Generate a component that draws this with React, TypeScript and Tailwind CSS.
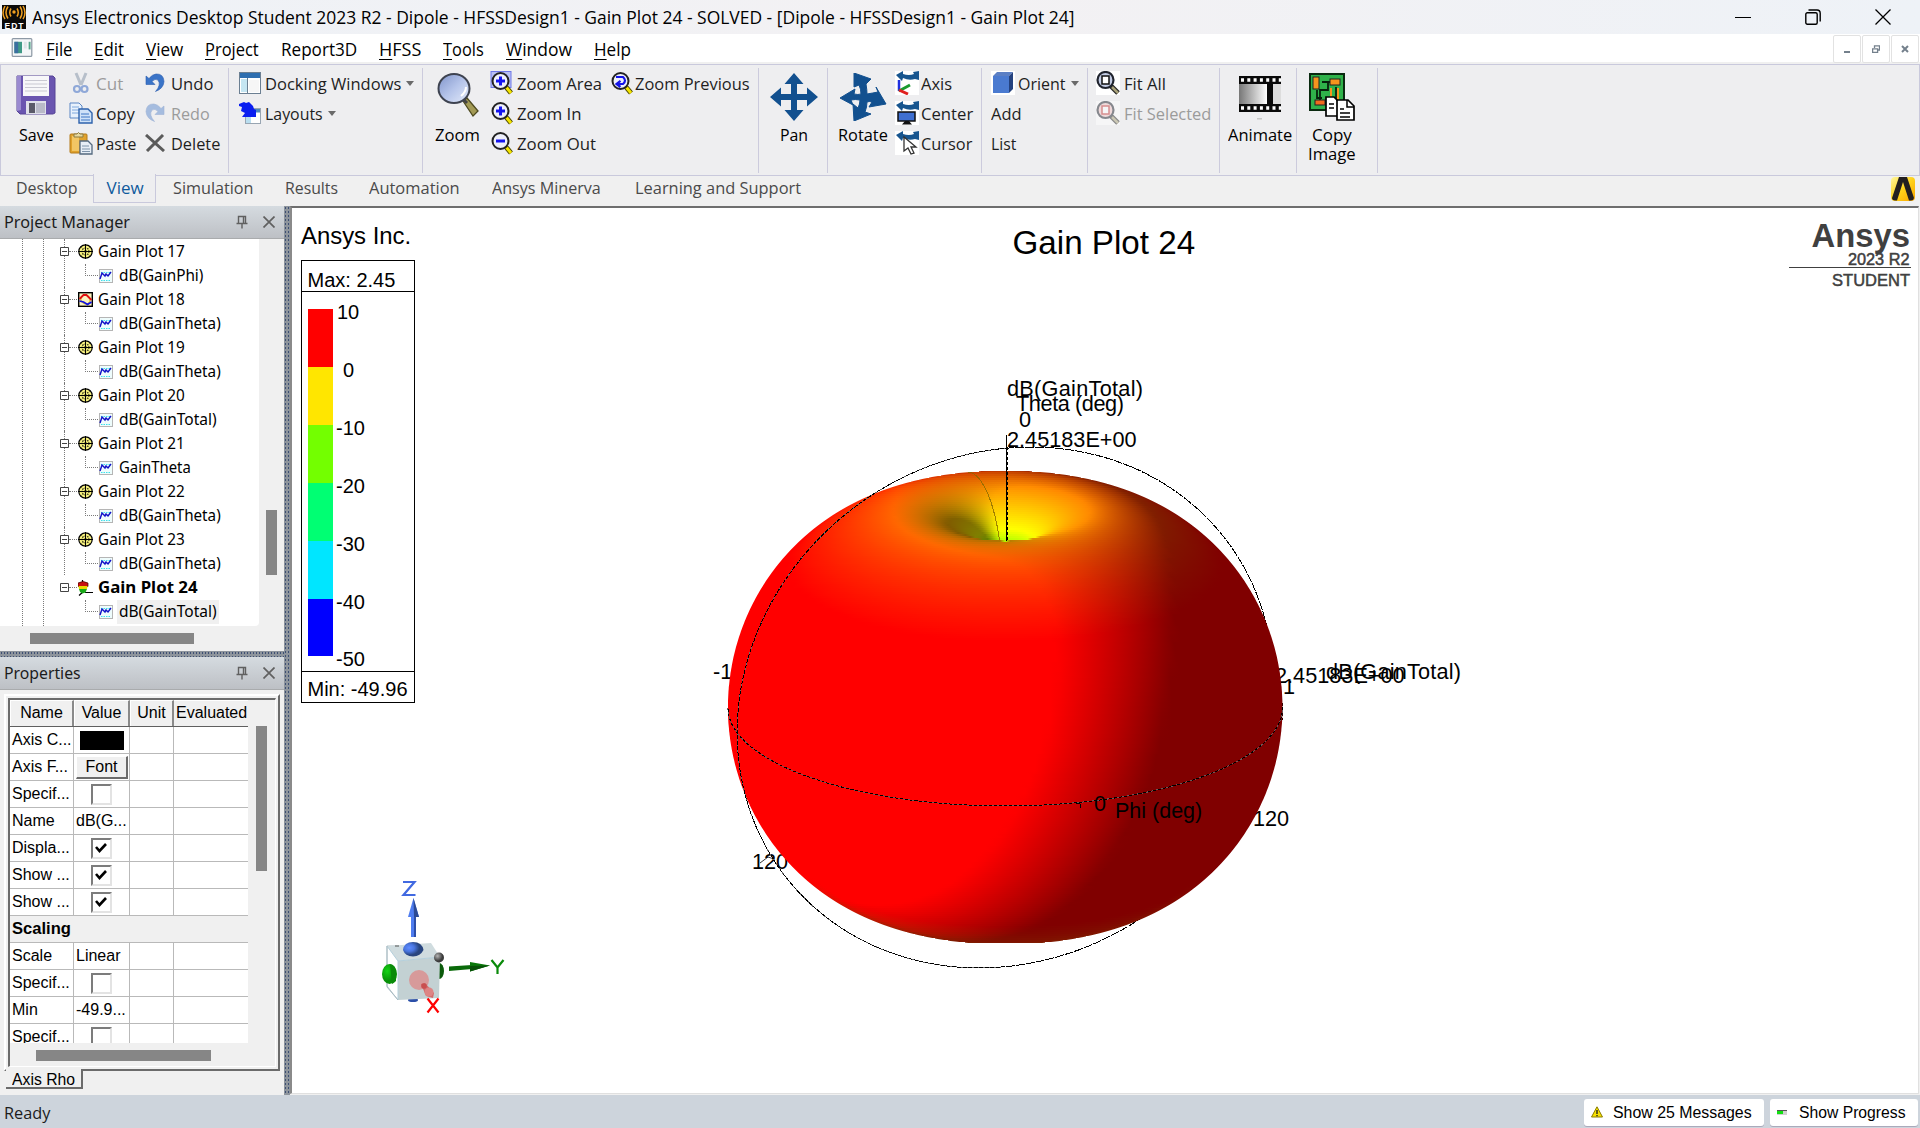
import React, { useLayoutEffect, useRef, useState } from "react";

/* ---------- text fitted to a given width ---------- */
function Fit({ w, className = "", children }: { w: number; className?: string; children: React.ReactNode }) {
  const ref = useRef<HTMLSpanElement>(null);
  const [k, setK] = useState(1);
  useLayoutEffect(() => {
    if (ref.current) setK(w / ref.current.offsetWidth);
  }, [w]);
  return (
    <span className={"inline-block shrink-0 whitespace-nowrap " + className} style={{ width: w }}>
      <span ref={ref} className="inline-block origin-left whitespace-nowrap" style={{ transform: `scaleX(${k})` }}>
        {children}
      </span>
    </span>
  );
}

/* ---------- radiation surface ---------- */
const CX = 1005.2;
const CY = 707.5;
const R = 277.3;
const EL = (20.8 * Math.PI) / 180;
const AZ = (14.8 * Math.PI) / 180;
const SE = Math.sin(EL);
const CE = Math.cos(EL);

function gain(c: number, s: number) {
  if (s < 0.006) return -49.96;
  return Math.max(-49.96, 2.45 + 20 * Math.log10(Math.max(1e-6, Math.abs(Math.cos((Math.PI / 2) * c) / s))));
}
// p: x right, f toward the viewer (horizontal), z up; unit sphere
function field(x: number, f: number, z: number) {
  const d = Math.sqrt(x * x + f * f + z * z) || 1e-9;
  const g = gain(z / d, Math.sqrt(x * x + f * f) / d);
  return d - (g + 49.96) / 52.41;
}
function toWorld(u: number, v: number, t: number): [number, number, number] {
  return [u, t * CE - v * SE, v * CE + t * SE];
}
function cast(u: number, v: number): [number, number, number] | null {
  const q = 1 - u * u - v * v;
  if (q <= 0) return null;
  const top = Math.sqrt(q);
  let prev = top;
  for (let t = top; t > -top; t -= 0.02) {
    const p = toWorld(u, v, t);
    if (field(p[0], p[1], p[2]) < 0) {
      let a = prev;
      let b = t;
      for (let i = 0; i < 12; i++) {
        const m = (a + b) / 2;
        const w = toWorld(u, v, m);
        if (field(w[0], w[1], w[2]) < 0) b = m;
        else a = m;
      }
      return toWorld(u, v, b);
    }
    prev = t;
  }
  return null;
}
const L = [-0.81, 0.47, 0.345];
function shade(p: [number, number, number]) {
  const [x, f, z] = p;
  const e = 0.002;
  let nx = field(x + e, f, z) - field(x - e, f, z);
  let nf = field(x, f + e, z) - field(x, f - e, z);
  let nz = field(x, f, z + e) - field(x, f, z - e);
  const n = Math.sqrt(nx * nx + nf * nf + nz * nz) || 1;
  nx /= n;
  nf /= n;
  nz /= n;
  const lit = Math.min(1, 0.5 + 1.16 * Math.max(0, nx * L[0] + nf * L[1] + nz * L[2]));
  const d = Math.sqrt(x * x + f * f + z * z) || 1e-9;
  const g = gain(z / d, Math.sqrt(x * x + f * f) / d);
  const raw = Math.max(0, -g) / 15.5;
  const h = Math.min(4, raw < 1 ? Math.pow(raw, 0.9) : 1 + (raw - 1) * 2.2);
  const r = h < 1 ? 1 : h < 2 ? 2 - h : 0;
  const gr = h < 1 ? h : h < 3 ? 1 : 4 - h;
  const b = h < 2 ? 0 : h < 3 ? h - 2 : 1;
  return `rgb(${Math.round(255 * r * lit)},${Math.round(255 * gr * lit)},${Math.round(255 * b * lit)})`;
}

type Row = { y: number; x0: number; x1: number; stops: { o: number; c: string }[] };
function buildRows(): Row[] {
  const rows: Row[] = [];
  for (let y = 470; y < 946; y += 2) {
    const v = (CY - (y + 1)) / R;
    if (!cast(0, v)) continue;
    const edge = (s: number) => {
      let a = 0;
      let b = s;
      for (let i = 0; i < 12; i++) {
        const m = (a + b) / 2;
        if (cast(m, v)) a = m;
        else b = m;
      }
      return a;
    };
    const u0 = edge(-1);
    const u1 = edge(1);
    const n = Math.max(6, Math.round(((u1 - u0) * R) / (y < 546 ? 5 : 10)));
    const stops: { o: number; c: string }[] = [];
    for (let i = 0; i <= n; i++) {
      const u = u0 + ((u1 - u0) * i) / n;
      const p = cast(u, v);
      if (p) stops.push({ o: i / n, c: shade(p) });
    }
    rows.push({ y, x0: CX + u0 * R, x1: CX + u1 * R, stops });
  }
  return rows;
}
const ROWS = buildRows();
const OUTLINE =
  "M" +
  ROWS.map((r) => `${r.x0.toFixed(1)} ${r.y + 1}`).join("L") +
  "L" +
  ROWS.slice()
    .reverse()
    .map((r) => `${r.x1.toFixed(1)} ${r.y + 1}`)
    .join("L") +
  "Z";

function curve(fn: (a: number) => [number, number, number], from: number, to: number) {
  const pts: string[] = [];
  for (let i = 0; i <= 90; i++) {
    const a = ((from + ((to - from) * i) / 90) * Math.PI) / 180;
    const [x, f, z] = fn(a);
    pts.push(`${(CX + R * x).toFixed(1)} ${(CY - R * (z * CE - f * SE)).toFixed(1)}`);
  }
  return "M" + pts.join("L");
}
const thetaRing = (a: number): [number, number, number] => [
  Math.sin(a) * Math.cos(AZ),
  -Math.sin(a) * Math.sin(AZ),
  Math.cos(a),
];
const phiRing = (a: number): [number, number, number] => [Math.cos(a), Math.sin(a), 0];
const seam = (a: number): [number, number, number] => {
  const r = (gain(Math.cos(a), Math.sin(a)) + 49.96) / 52.41;
  return [-r * Math.sin(a) * Math.sin(AZ), -r * Math.sin(a) * Math.cos(AZ), r * Math.cos(a)];
};
const RING_BACK = curve(thetaRing, 0, 180);
const RING_FRONT = curve(thetaRing, 180, 360);
const EQUATOR = curve(phiRing, 0, 180);
const SEAM = curve(seam, 7.5, 36);

const BANDS = ["#ff0000", "#ffe600", "#73ff00", "#00ff73", "#00e6ff", "#0000ff"];
const TICKS: [string, number, number][] = [
  ["10", 337, 319],
  ["0", 343, 376.5],
  ["-10", 336, 434.5],
  ["-20", 336, 492.5],
  ["-30", 336, 550.5],
  ["-40", 336, 608.5],
  ["-50", 336, 665.5],
];

function Triad() {
  return (
    <g>
      <path d="M387 946l10-0M387 946v40l11 14" stroke="#b9c6cb" fill="none" />
      <ellipse cx="413" cy="1000" rx="5" ry="2" fill="#2b4fa8" />
      <ellipse cx="439" cy="971" rx="5" ry="8" fill="#0b5a0b" />
      <path d="M387 946L431 943L440 957L398 961Z" fill="#d0dcdf" />
      <path d="M398 961L440 957L439 998L398 1000Z" fill="#c3d1d3" />
      <path d="M387 946L398 961V1000M398 961L440 957" stroke="#b5d0dc" fill="none" />
      <path d="M387 946v41l11 13" stroke="#a9bcc4" fill="none" />
      <path d="M395 946h4" stroke="#555" />
      <ellipse cx="389.5" cy="974" rx="7.5" ry="10" fill="url(#gGreen)" />
      <path d="M390 964q6 1 6 9v8q-2 2-4 3z" fill="#0a8a0a" />
      <path d="M403 950q1-8 10-8t10.500 8q-3 6-10.500 6.500q-8-.5-10-6.500z" fill="url(#gBlue)" />
      <circle cx="439" cy="957.500" r="5" fill="url(#gGray)" />
      <rect x="411" y="914" width="5" height="23" fill="#4f7df0" />
      <rect x="414" y="914" width="2" height="23" fill="#2c4ea8" />
      <path d="M413.500 898L408 917h11z" fill="#4f7df0" />
      <path d="M413.500 898L414 917h5z" fill="#2c4a94" />
      <path d="M449 966.500l23-1.500v4l-23 2z" fill="#0a6a0a" />
      <path d="M470 962l20 3.500-20 6z" fill="#0a780a" />
      <path d="M470 966l20-.5-20 6z" fill="#065006" />
      <circle cx="419" cy="980" r="10" fill="#d79a9a" />
      <path d="M421 984l4-1 9 10-1 5-7-2z" fill="#d46a6a" />
      <circle cx="429" cy="992" r="4.500" fill="#dd8585" />
      <circle cx="424" cy="986" r="2.800" fill="#c94f4f" />
      <path d="M403 882h11.500L403.500 895H415.500" fill="none" stroke="#4169e1" strokeWidth="2.200" />
      <path d="M491.500 960l6 7.500 6-7.500M497.500 967v7" fill="none" stroke="#0a8a0a" strokeWidth="2.200" />
      <path d="M427.500 998.500l11 14M438.500 998.500l-11 14" fill="none" stroke="#f00" strokeWidth="2.200" />
    </g>
  );
}

function Plot() {
  return (
    <svg
      className="block h-[885px] w-[1626px]"
      viewBox="292 208 1626 885"
      fontFamily="'Liberation Sans', Arial, sans-serif"
      fill="#000"
    >
      <defs>
        <clipPath id="outline">
          <path d={OUTLINE} />
        </clipPath>
        <radialGradient id="gGreen" cx=".35" cy=".35">
          <stop offset="0" stopColor="#14d414" />
          <stop offset="1" stopColor="#089008" />
        </radialGradient>
        <radialGradient id="gBlue" cx=".3" cy=".4">
          <stop offset="0" stopColor="#5f8cff" />
          <stop offset=".5" stopColor="#4a76e0" />
          <stop offset="1" stopColor="#28457f" />
        </radialGradient>
        <radialGradient id="gGray" cx=".35" cy=".35">
          <stop offset="0" stopColor="#b5b5b5" />
          <stop offset="1" stopColor="#3c3c3c" />
        </radialGradient>
        {ROWS.map((r, i) => (
          <linearGradient key={i} id={"r" + i} gradientUnits="userSpaceOnUse" x1={r.x0} x2={r.x1} y1="0" y2="0">
            {r.stops.map((s, j) => (
              <stop key={j} offset={s.o} stopColor={s.c} />
            ))}
          </linearGradient>
        ))}
      </defs>

      <text x="301" y="244" fontSize="23.900">Ansys Inc.</text>
      <text x="1012.500" y="253.500" fontSize="33.200">Gain Plot 24</text>

      <g fill="#404040">
        <text x="1811.500" y="246.500" fontSize="32.800" fontWeight="bold">Ansys</text>
        <text x="1909.500" y="265" fontSize="16.300" textAnchor="end" stroke="#404040" strokeWidth=".5">2023 R2</text>
        <rect x="1789" y="267" width="122" height="1" />
        <text x="1910" y="286" fontSize="16.500" textAnchor="end" stroke="#404040" strokeWidth=".5">STUDENT</text>
      </g>

      <g shapeRendering="crispEdges">
        <rect x="301.500" y="260.500" width="113" height="442" fill="#fff" stroke="#000" />
        <path d="M301 291.500H415M301 671.500H415" stroke="#000" />
        {BANDS.map((c, i) => (
          <rect key={c} x="308" y={309 + i * 58} width="25" height={i === 5 ? 57 : 58} fill={c} />
        ))}
      </g>
      <g fontSize="20">
        <text x="307.500" y="287">Max: 2.45</text>
        <text x="307.500" y="696">Min: -49.96</text>
        {TICKS.map(([t, x, y]) => (
          <text key={t} x={x} y={y}>{t}</text>
        ))}
      </g>

      <g fontSize="21.700">
        <text x="1007" y="396" textLength="136">dB(GainTotal)</text>
        <text x="1016" y="411" textLength="108">Theta (deg)</text>
        <text x="1019" y="427">0</text>
        <text x="1007" y="447">2.45183E+00</text>
        <text x="1275" y="683">2.45183E+00</text>
        <text x="1326" y="679" textLength="135">dB(GainTotal)</text>
        <text x="1283" y="694">1</text>
        <text x="713" y="679">-1</text>
        <text x="1253" y="826">120</text>
        <text x="752" y="869">120</text>
      </g>
      <g fill="none" stroke="#000" strokeWidth="1">
        <path d={RING_BACK} shapeRendering="crispEdges" strokeDasharray="9 1" />
        <path d="M760 863l8-6 6 2" strokeWidth=".8" />
        <path d="M1282.500 703V720" strokeDasharray="3 2" shapeRendering="crispEdges" />
      </g>
      <g clipPath="url(#outline)" shapeRendering="crispEdges">
        {ROWS.map((r, i) => (
          <rect key={i} x={r.x0 - 3} y={r.y} width={r.x1 - r.x0 + 6} height="2" fill={`url(#r${i})`} />
        ))}
      </g>
      <g fill="none" strokeWidth="1" shapeRendering="crispEdges">
        <path d={SEAM} stroke="#8a6a00" strokeOpacity=".8" />
        <path d={RING_FRONT} stroke="#6a6a6a" />
        <path d={RING_FRONT} stroke="#000" strokeDasharray="4 1.500" />
        <path d={EQUATOR} stroke="#6a5a5a" />
        <path d={EQUATOR} stroke="#000" strokeDasharray="3 2" />
        <path d="M1006.500 435V541" stroke="#000" />
        <path d="M1007.500 447V541" stroke="#000" strokeDasharray="3 2" />
        <path d="M1076 803l4 1 1 4" stroke="#000" />
      </g>
      <g fontSize="21.500">
        <text x="1094" y="811">0</text>
        <text x="1115" y="818">Phi (deg)</text>
      </g>
      <Triad />
    </svg>
  );
}

/* ---------- ribbon icons ---------- */
type IP = { className?: string };
const S = ({ vb, className, children }: { vb: string; className: string; children: React.ReactNode }) => (
  <svg viewBox={vb} className={"block shrink-0 " + className}>{children}</svg>
);

const SaveIcon = () => (
  <S vb="0 0 40 40" className="h-10 w-10">
    <path d="M1 1h36l2 2v35l-2 1H4l-3-3z" fill="#6a55b0" stroke="#564596" />
    <path d="M1 1h4v34l-4 1z" fill="#9a8ad0" />
    <rect x="7" y="1" width="26" height="20" fill="#f7f7f9" />
    <path d="M9 5.500h22M9 9h22M9 12.500h22M9 16h22" stroke="#c9c9d2" />
    <rect x="10" y="26" width="20" height="13" fill="#dfe0ea" />
    <rect x="13" y="28" width="6" height="10" fill="#5a5a68" />
    <rect x="20" y="28" width="9" height="10" fill="#b9bac8" />
  </S>
);
const CutIcon = () => (
  <S vb="0 0 24 24" className="h-6 w-6">
    <path d="M7 2l5 12M17 2l-5 12" stroke="#b7bfca" strokeWidth="3" />
    <circle cx="8" cy="18" r="3" fill="none" stroke="#8fa8d8" strokeWidth="2.200" />
    <circle cx="15.500" cy="18" r="3" fill="none" stroke="#8fa8d8" strokeWidth="2.200" />
  </S>
);
const CopyIcon = () => (
  <S vb="0 0 24 24" className="h-6 w-6">
    <path d="M1 2h9l3 3v12H1z" fill="#e8f1fc" stroke="#5a86c4" />
    <path d="M3 6h7M3 9h7M3 12h7" stroke="#7fa8dd" />
    <path d="M10 8h9l4 4v10H10z" fill="#cfe2f8" stroke="#2e62ac" strokeWidth="1.400" />
    <path d="M12 13h8M12 16h9M12 19h9" stroke="#3f77c4" />
  </S>
);
const PasteIcon = () => (
  <S vb="0 0 24 24" className="h-6 w-6">
    <rect x="1" y="3" width="17" height="19" rx="1" fill="#e0a22c" stroke="#b47a1a" />
    <rect x="3" y="5" width="7" height="15" fill="#f2c664" />
    <path d="M5 6V3h3q1.500-3 3 0h3v3z" fill="#e7d9a0" stroke="#8a7a40" />
    <path d="M11 10h8l4 4v9H11z" fill="#e7eef6" stroke="#54697f" strokeWidth="1.300" />
    <path d="M13 15h7M13 18h8M13 20.500h8" stroke="#7f94aa" />
  </S>
);
const UndoIcon = ({ className = "" }: IP) => (
  <S vb="0 0 20 22" className={"h-[22px] w-5 " + className}>
    <path d="M1 4v8.500h9l-3-3q3-3.500 6-1.500q3.500 5-2.500 11.500q8-3 8.500-10q-.5-8-8-7.500q-4 .5-7 4.500z" fill="#3a74c8" stroke="#2a5cae" strokeWidth=".6" />
  </S>
);
const DeleteIcon = () => (
  <S vb="0 0 20 18" className="h-[18px] w-5">
    <path d="M1 1l18 16M18 1L2 17" stroke="#5b5b5b" strokeWidth="3" fill="none" />
  </S>
);
const DockIcon = () => (
  <S vb="0 0 22 22" className="h-[22px] w-[22px]">
    <rect x=".5" y=".5" width="21" height="21" fill="#fff" stroke="#6b7f92" />
    <rect x="1" y="1" width="20" height="5" fill="#2f6fb0" />
    <rect x="2" y="7" width="6" height="13" fill="#c5e6f2" />
    <path d="M8.500 6v15" stroke="#6b7f92" />
    <rect x="10" y="8" width="10" height="12" fill="#f6f6f6" />
  </S>
);
const LayoutIcon = () => (
  <S vb="0 0 22 24" className="h-6 w-[22px]">
    <rect x="6.500" y="7.500" width="15" height="15" fill="#fff" stroke="#98a5b2" />
    <rect x="7" y="8" width="14" height="3.500" fill="#4d87bd" />
    <rect x="7" y="12" width="5" height="10" fill="#b9def0" />
    <path d="M0 3l5-2 2 1 3-1 4 4 1 3 2 1v7H3l3-4-4-2 1-4-3-1z" fill="#0a1ef0" />
  </S>
);
const BigZoom = () => (
  <S vb="0 0 42 44" className="h-11 w-[42px]">
    <defs>
      <linearGradient id="lens" x1="0" y1="0" x2="1" y2="1">
        <stop offset="0" stopColor="#7f93c9" />
        <stop offset=".5" stopColor="#b5c4ea" />
        <stop offset="1" stopColor="#e4ebfa" />
      </linearGradient>
    </defs>
    <path d="M26 28l4-3 11 13-5 5z" fill="#a39a55" stroke="#4e4a20" strokeWidth="1.300" />
    <path d="M25 25l5 5" stroke="#444" strokeWidth="3" />
    <ellipse cx="17" cy="15.500" rx="15.500" ry="14.500" fill="url(#lens)" stroke="#3e4350" strokeWidth="2" />
    <path d="M24 23q5-4 5-9" stroke="#fff" strokeWidth="2" fill="none" />
  </S>
);
const ZoomGlyph = ({ kind }: { kind: string }) => (
  <S vb="0 0 24 24" className="h-6 w-6">
    {kind === "area" && <rect x="1" y=".5" width="20" height="16" fill="#b9c0f4" stroke="#6f78e8" />}
    <path d="M16 16l5 6" stroke="#4a4600" strokeWidth="5" />
    <path d="M16.500 16.500l4.500 5.500" stroke="#f4e400" strokeWidth="3" />
    <circle cx="10.500" cy="10" r="8" fill="#eef0fb" stroke="#222" strokeWidth="2" />
    {kind === "prev" ? (
      <path d="M6 6h7q4 3.500 0 7H8m2.500-3.200L6.500 13l4 3" fill="none" stroke="#1414e8" strokeWidth="2.200" />
    ) : (
      <path d={kind === "out" ? "M6 10h9" : "M6 10h9M10.500 5.500v9"} stroke="#1414f0" strokeWidth="3" />
    )}
  </S>
);
const PanIcon = () => (
  <S vb="0 0 48 48" className="h-12 w-12">
    <path
      d="M24 0l9.500 11H27v10h10v-6.500L48 24l-11 9.500V27H27v10h6.500L24 48l-9.500-11H21V27H11v6.500L0 24l11-9.500V21h10V11h-6.500z"
      fill="#12508f"
    />
  </S>
);
const RotateIcon = () => (
  <S vb="0 0 48 48" className="h-12 w-12">
    <path
      d="M15 0l17 6-5 5q1 6 1 10q6-1 11-2l-2-5 10 17-17 3 3-5q-3-1-5 0q0 5-2 10l6 2-17 7-1-17 5 4q2-4 2-8q-5-1-9 0l2 5L1 25l15-9-1 5q4 1 7 0q0-5-2-9l-5 2z"
      fill="#12508f"
      stroke="#12508f"
    />
  </S>
);
const MiniRotate = () => (
  <path d="M1 4l7-4v3q6 2 11 0l-1-2 6-1v9l-4-1q-6 2-12-1l-1 3z" fill="#17558f" />
);
const AxisIcon = () => (
  <S vb="0 0 24 24" className="h-6 w-6">
    <rect width="24" height="24" fill="#fff" />
    <MiniRotate />
    <path d="M4 9v11" stroke="#2030e0" strokeWidth="2.500" />
    <path d="M4 20l11-6" stroke="#1a9a30" strokeWidth="3" />
    <path d="M4 19l9 4" stroke="#e02020" strokeWidth="3" />
  </S>
);
const CenterIcon = () => (
  <S vb="0 0 24 24" className="h-6 w-6">
    <rect width="24" height="24" fill="#fff" />
    <MiniRotate />
    <rect x="3" y="11" width="17" height="9" fill="#3f6fd0" stroke="#111" strokeWidth="1.500" />
    <path d="M10 20h4l3 3.500H7z" fill="#111" />
  </S>
);
const CursorIcon = () => (
  <S vb="0 0 24 24" className="h-6 w-6">
    <rect width="24" height="24" fill="#fff" />
    <MiniRotate />
    <path d="M9 6v14l4-3 3 6 3-1-3-6h5z" fill="#fff" stroke="#333" strokeWidth="1.300" />
  </S>
);
const CubeIcon = () => (
  <S vb="0 0 24 24" className="h-6 w-6">
    <rect width="24" height="24" fill="#fff" />
    <path d="M2 5l4-4h16l-4 4z" fill="#5b7fc4" />
    <path d="M18 5l4-4v17l-4 4z" fill="#24427f" />
    <rect x="2" y="5" width="16" height="17" fill="#4a7ad0" />
  </S>
);
const FitIcon = ({ red = false }: { red?: boolean }) => (
  <S vb="0 0 24 24" className={red ? "h-6 w-6 opacity-50" : "h-6 w-6"}>
    <rect width="24" height="24" fill="#fff" />
    <path d="M14 14l8 8" stroke="#222" strokeWidth="5" />
    <path d="M16 16l6 6" stroke="#a9a27a" strokeWidth="2.500" />
    <circle cx="9.500" cy="9" r="8" fill={red ? "#f0c6c6" : "#c3cce4"} stroke="#20242e" strokeWidth="2.200" />
    <rect x="6" y="5" width="7" height="8" fill="#fff" stroke={red ? "#c03030" : "#111"} strokeWidth="1.500" />
  </S>
);
const AnimateIcon = () => (
  <S vb="0 0 42 44" className="h-11 w-[42px]">
    <defs>
      <linearGradient id="film">
        <stop offset="0" stopColor="#777" />
        <stop offset="1" stopColor="#fff" />
      </linearGradient>
    </defs>
    <rect width="42" height="36" fill="#0a0a0a" />
    <rect x="0" y="8" width="28" height="20" fill="url(#film)" />
    <rect x="34" y="8" width="8" height="20" fill="#ddd" />
    <path d="M2 4h40M2 32h40" stroke="#fff" strokeWidth="3.500" strokeDasharray="3 3.300" />
    <rect x="18" y="42" width="5" height="1.500" fill="#c8c8c8" />
  </S>
);
const CopyImageIcon = () => (
  <S vb="0 0 46 48" className="h-12 w-[46px]">
    <rect x="1" y="1" width="34" height="36" fill="#2fb24a" stroke="#0a2a10" strokeWidth="2" />
    <path d="M13 9h6v8h-8v12M19 9h5M22 17v14M27 14v12M8 17v8h5" stroke="#06220c" strokeWidth="1.800" fill="none" />
    <rect x="4" y="4" width="6" height="12" fill="#f7941d" stroke="#222" />
    <rect x="21" y="6" width="10" height="6" fill="#f7941d" stroke="#222" />
    <rect x="6" y="27" width="10" height="5" fill="#f26a1d" stroke="#222" />
    <path d="M22 15v12M29 15v12" stroke="#f7941d" strokeWidth="2" />
    <path d="M17 24h8l4 4v15H17z" fill="#fff" stroke="#000" strokeWidth="1.700" />
    <path d="M28 27h11l6 6v14H28z" fill="#fff" stroke="#000" strokeWidth="1.700" />
    <path d="M38 27v7h7M20 31h5M20 35h5M31 36h4M31 40h10M31 44h10" stroke="#000" strokeWidth="1.500" fill="none" />
  </S>
);
const Caret = () => (
  <svg viewBox="0 0 8 5" className="ml-[5px] h-[5px] w-[8px] shrink-0">
    <path d="M0 0h8L4 5z" fill="#6a6a6a" />
  </svg>
);

/* ---------- ribbon ---------- */
function Item({ icon, iw = 28, w, dim, caret, children }: {
  icon?: React.ReactNode; iw?: number; w: number; dim?: boolean; caret?: boolean; children: string;
}) {
  return (
    <div className={"flex h-[30px] items-center " + (dim ? "text-[#9b9b9b]" : "text-[#1e1e1e]")}>
      {icon && <span className="flex shrink-0" style={{ width: iw }}>{icon}</span>}
      <Fit w={w}>{children}</Fit>
      {caret && <Caret />}
    </div>
  );
}
function Big({ icon, lines, pad }: { icon: React.ReactNode; lines: [string, number][]; pad: string }) {
  return (
    <div className="flex flex-col items-center">
      <div className={"flex h-[52px] items-start " + pad}>{icon}</div>
      {lines.map(([t, w]) => (
        <div key={t} className="flex h-[19px] items-center">
          <Fit w={w}>{t}</Fit>
        </div>
      ))}
    </div>
  );
}
const Group = ({ className, children }: { className: string; children: React.ReactNode }) => (
  <div className={"flex h-[105px] shrink-0 border-r border-[#cccbdd] " + className}>{children}</div>
);

function Ribbon() {
  return (
    <div className="mt-[2px] flex h-[112px] border border-[#c9c9dc] bg-[#eeeef0] pt-[3px] text-[17px]">
      <Group className="w-[228px]">
        <div className="w-[68px] pt-[5px] pl-[2px]">
          <Big icon={<SaveIcon />} pad="pt-[2px]" lines={[["Save", 35]]} />
        </div>
        <div className="w-[75px]">
          <Item icon={<CutIcon />} iw={27} w={27} dim>Cut</Item>
          <Item icon={<CopyIcon />} iw={27} w={39}>Copy</Item>
          <Item icon={<PasteIcon />} iw={27} w={40}>Paste</Item>
        </div>
        <div className="pl-px">
          <Item icon={<UndoIcon />} iw={26} w={42}>Undo</Item>
          <Item icon={<UndoIcon className="-scale-x-100 opacity-40" />} iw={26} w={39} dim>Redo</Item>
          <Item icon={<DeleteIcon />} iw={26} w={49}>Delete</Item>
        </div>
      </Group>
      <Group className="w-[194px] pl-[10px]">
        <div>
          <Item icon={<DockIcon />} iw={26} w={136} caret>Docking Windows</Item>
          <Item icon={<LayoutIcon />} iw={26} w={58} caret>Layouts</Item>
        </div>
      </Group>
      <Group className="w-[336px] pl-[12px]">
        <div className="w-[54px] pt-[5px]">
          <div className="w-[45px]">
            <Big icon={<BigZoom />} pad="" lines={[["Zoom", 45]]} />
          </div>
        </div>
        <div className="w-[121px] pl-px">
          <Item icon={<ZoomGlyph kind="area" />} iw={26.500} w={85}>Zoom Area</Item>
          <Item icon={<ZoomGlyph kind="in" />} iw={26.500} w={65}>Zoom In</Item>
          <Item icon={<ZoomGlyph kind="out" />} iw={26.500} w={79}>Zoom Out</Item>
        </div>
        <Item icon={<ZoomGlyph kind="prev" />} iw={25} w={115}>Zoom Previous</Item>
      </Group>
      <Group className="w-[69px] justify-center pt-[5px] pl-[2px]">
        <Big icon={<PanIcon />} pad="" lines={[["Pan", 28]]} />
      </Group>
      <Group className="w-[154px] pl-[10px]">
        <div className="w-[57px] pt-[5px]">
          <div className="w-[49px]">
            <Big icon={<RotateIcon />} pad="" lines={[["Rotate", 50]]} />
          </div>
        </div>
        <div>
          <Item icon={<AxisIcon />} iw={26} w={31}>Axis</Item>
          <Item icon={<CenterIcon />} iw={26} w={52}>Center</Item>
          <Item icon={<CursorIcon />} iw={26} w={51}>Cursor</Item>
        </div>
      </Group>
      <Group className="w-[106px] pl-[9px]">
        <div>
          <Item icon={<CubeIcon />} iw={27} w={48} caret>Orient</Item>
          <Item w={31}>Add</Item>
          <Item w={25}>List</Item>
        </div>
      </Group>
      <Group className="w-[132px] pl-[8px]">
        <div>
          <Item icon={<FitIcon />} w={42}>Fit All</Item>
          <Item icon={<FitIcon red />} w={87} dim>Fit Selected</Item>
        </div>
      </Group>
      <Group className="w-[77px] justify-center pt-[5px] pl-[4px]">
        <Big icon={<AnimateIcon />} pad="pt-[3px]" lines={[["Animate", 64]]} />
      </Group>
      <Group className="w-[81px] pt-[5px] pl-[11px]">
        <Big icon={<CopyImageIcon />} pad="" lines={[["Copy", 40], ["Image", 48]]} />
      </Group>
    </div>
  );
}

/* ---------- panels ---------- */
const PanelHeader = ({ title, w }: { title: string; w: number }) => (
  <div className="flex h-[33px] shrink-0 items-center border-b border-[#a9abad] bg-linear-to-b from-[#d5dbe0] to-[#bdc0c5] pr-[9px] pl-[4px] font-['Noto_Sans',sans-serif] text-[17px] text-[#1c1c1c]">
    <Fit w={w} className="-mt-[2px]">{title}</Fit>
    <svg viewBox="0 0 12 14" className="mr-[15px] ml-auto h-[14px] w-[12px]">
      <path d="M2.500 8V1.500h7V8M7.500 1.500V8M.5 8.500h11M6 9v4.500" fill="none" stroke="#606060" strokeWidth="1.400" />
    </svg>
    <svg viewBox="0 0 12 12" className="h-[12px] w-[12px]">
      <path d="M.5.5l11 11M11.500.5l-11 11" stroke="#606060" strokeWidth="1.700" />
    </svg>
  </div>
);

const PLOTS: [string, string, number][] = [
  ["Gain Plot 17", "dB(GainPhi)", 84],
  ["Gain Plot 18", "dB(GainTheta)", 102],
  ["Gain Plot 19", "dB(GainTheta)", 102],
  ["Gain Plot 20", "dB(GainTotal)", 98],
  ["Gain Plot 21", "GainTheta", 72],
  ["Gain Plot 22", "dB(GainTheta)", 102],
  ["Gain Plot 23", "dB(GainTheta)", 102],
  ["Gain Plot 24", "dB(GainTotal)", 98],
];

const RadIcon = () => (
  <svg viewBox="0 0 15 15" className="h-[15px] w-[15px] shrink-0">
    <circle cx="7.500" cy="7.500" r="6.700" fill="#f6f07c" stroke="#000" strokeWidth="1.200" />
    <circle cx="7.500" cy="7.500" r="3.500" fill="none" stroke="#000" strokeDasharray="1.500 1" />
    <path d="M7.500 0v15M0 7.500h15" stroke="#000" strokeWidth="1" />
    <path d="M3 3l9 9M12 3l-9 9" stroke="#000" strokeWidth=".6" strokeDasharray="1 1" />
  </svg>
);
const CutPlotIcon = () => (
  <svg viewBox="0 0 15 15" className="h-[15px] w-[15px] shrink-0">
    <rect x=".7" y=".7" width="13.600" height="13.600" fill="#faf3c0" stroke="#000" strokeWidth="1.400" />
    <circle cx="7.500" cy="7.500" r="4.500" fill="none" stroke="#e0c020" />
    <path d="M1.500 7l4-4h3l5 5" fill="none" stroke="#e01010" strokeWidth="1.800" />
    <path d="M1.500 9l4 1 4 2.500 4-2.500" fill="none" stroke="#1010e0" strokeWidth="1.800" />
  </svg>
);
const PolarIcon = () => (
  <svg viewBox="0 0 15 16" className="h-4 w-[15px] shrink-0">
    <path d="M4.500 2V0M7 12.500h8M6 11l-5 4.500" stroke="#000" strokeWidth="1.200" />
    <path d="M0 3q5-3 10 0v3.500H0z" fill="#c81010" stroke="#400" strokeWidth=".7" />
    <path d="M.5 6h9L9 9H1z" fill="#e8d800" />
    <path d="M1 9h8l-1.500 3.500-3 1L2 12z" fill="#18a818" />
  </svg>
);
const TraceIcon = () => (
  <svg viewBox="0 0 14 14" className="h-[14px] w-[14px] shrink-0">
    <rect x=".5" y=".5" width="13" height="13" fill="#eefcfc" stroke="#b5b5b5" />
    <path d="M2 3.500h10M2 11.500h10" stroke="#3ee0ec" strokeDasharray="1.500 1" />
    <path d="M1 10l2-6 3 3 1-2 2 2 3-4" fill="none" stroke="#1010c8" strokeWidth="1.400" />
  </svg>
);

function Tree() {
  return (
    <div className="flex h-[387px] shrink-0 bg-[#f0f0f0]">
      <div className="flex w-[259px] overflow-hidden rounded-br bg-white font-['Noto_Sans',sans-serif] text-[15.500px] text-black">
        <div className="ml-[22px] w-[21px] shrink-0 border-l border-dotted border-[#7a7a7a]" />
        <div className="w-[21px] shrink-0 border-l border-dotted border-[#7a7a7a]" />
        <div>
          {PLOTS.map(([a, b, w], i) => (
            <div key={a} className={"h-12 " + (i < 7 ? "border-l border-dotted border-[#7a7a7a]" : "pl-px")}>
              <div className="-ml-[5px] flex h-[25px] items-center">
                <svg viewBox="0 0 9 9" className="h-[9px] w-[9px] shrink-0 bg-white">
                  <path d="M.5.5h8v8h-8zM2 4.500h5" fill="none" stroke="#444" />
                </svg>
                <span className="mr-px w-2 border-t border-dotted border-[#7a7a7a]" />
                {i === 1 ? <CutPlotIcon /> : i === 7 ? <PolarIcon /> : <RadIcon />}
                <Fit w={i === 7 ? 100 : 87} className={"ml-[5px] " + (i === 7 ? "font-bold" : "")}>{a}</Fit>
              </div>
              <div className="flex h-6 items-center pl-5">
                <span className="mb-3 h-3 w-[13px] shrink-0 border-b border-l border-dotted border-[#7a7a7a]" />
                <span className="w-px shrink-0" />
                <TraceIcon />
                <span className={"ml-[4px] flex h-6 items-center px-[2px] " + (i === 7 ? "bg-[#f0f0f0]" : "")}>
                  <Fit w={w}>{b}</Fit>
                </span>
              </div>
            </div>
          ))}
        </div>
      </div>
      <div className="mt-[271px] ml-[7px] h-[65px] w-[11px] bg-[#868686]" />
    </div>
  );
}

const Check = ({ on }: { on: boolean }) => (
  <span className="flex h-[21px] w-[21px] items-center justify-center border-2 border-t-[#7c7c7c] border-r-[#e3e3e3] border-b-[#e3e3e3] border-l-[#7c7c7c] bg-white">
    {on && (
      <svg viewBox="0 0 12 12" className="mr-[2px] mb-[1px] h-3 w-3">
        <path d="M1 5l3.500 4L11 2" fill="none" stroke="#000" strokeWidth="2.600" />
      </svg>
    )}
  </span>
);

const PROPS: [string, React.ReactNode][] = [
  ["Axis C...", <span className="ml-[6px] h-[19px] w-[44px] bg-black" />],
  ["Axis F...", <span className="ml-[2px] flex h-[23px] w-[52px] items-center justify-center border-t border-r-2 border-b-2 border-l border-t-white border-r-[#6b6b6b] border-b-[#6b6b6b] border-l-white bg-[#f0f0f0]">Font</span>],
  ["Specif...", <span className="ml-[17px]"><Check on={false} /></span>],
  ["Name", <span className="ml-[2px]">dB(G...</span>],
  ["Displa...", <span className="ml-[17px]"><Check on /></span>],
  ["Show ...", <span className="ml-[17px]"><Check on /></span>],
  ["Show ...", <span className="ml-[17px]"><Check on /></span>],
  ["Scaling", null],
  ["Scale", <span className="ml-[2px]">Linear</span>],
  ["Specif...", <span className="ml-[17px]"><Check on={false} /></span>],
  ["Min", <span className="ml-[2px]">-49.9...</span>],
  ["Specif...", <span className="ml-[17px]"><Check on={false} /></span>],
];
const HEAD = "flex h-[26px] items-center justify-center border-r-2 border-r-[#8a8a8a] border-t border-l border-t-white border-l-white bg-[#f0f0f0] pb-px";

function Properties() {
  return (
    <div className="h-[405px] shrink-0 bg-[#f0f0f0] pt-[4px] pl-[4px] font-['Liberation_Sans',Arial,sans-serif] text-[16px] text-black">
      <div className="h-[377px] w-[276px] border-t-2 border-r-2 border-b-2 border-l-2 border-t-white border-r-[#6b6b6b] border-b-[#6b6b6b] border-l-white p-[2px]">
        <div className="h-[369px] w-[268px] border border-t-2 border-l-2 border-t-[#6b6b6b] border-r-white border-b-white border-l-[#6b6b6b]">
          <div className="flex h-[344px]">
            <div className="h-[343px] w-[238px] overflow-hidden bg-white">
              <div className="grid h-[27px] grid-cols-[64px_56px_44px_74px] border-b border-[#5f5f5f]">
                <span className={HEAD}>Name</span>
                <span className={HEAD}>Value</span>
                <span className={HEAD}>Unit</span>
                <span className="flex h-[26px] items-center justify-center border-t border-t-white bg-[#f0f0f0] pb-px pl-px">
                  <Fit w={71}>Evaluated</Fit>
                </span>
              </div>
              {PROPS.map(([n, v], i) =>
                v === null ? (
                  <div key={i} className="flex h-[27px] items-center border-b border-[#b9b9b9] bg-[#f0f0f0] pl-[2px] font-bold">
                    <Fit w={59}>{n}</Fit>
                  </div>
                ) : (
                  <div key={i} className="grid h-[27px] grid-cols-[64px_56px_44px_74px] border-b border-[#b9b9b9]">
                    <span className="flex items-center border-r border-[#b9b9b9] pl-[2px]">{n}</span>
                    <span className="flex items-center border-r border-[#b9b9b9]">{v}</span>
                    <span className="border-r border-[#b9b9b9]" />
                    <span />
                  </div>
                ),
              )}
            </div>
            <div className="mt-[26px] ml-[8px] h-[145px] w-[11px] bg-[#868686]" />
          </div>
          <div className="mt-[6px] ml-[26px] h-[11px] w-[175px] bg-[#868686]" />
        </div>
      </div>
      <div className="-mt-[2px] ml-[2px] flex h-[20px] w-[77px] items-center border-r-2 border-b-2 border-[#6b6b6b] bg-[#f0f0f0] pt-[3px] pl-[6px]">
        <Fit w={63}>Axis Rho</Fit>
      </div>
    </div>
  );
}

const SPLIT = "bg-[#8d949c] bg-[radial-gradient(#3d4f73_34%,transparent_38%)] bg-[length:3px_4px]";

const MENU: [string, string, number, string][] = [
  ["F", "ile", 27, "ml-[13px]"],
  ["E", "dit", 30, "ml-[21px]"],
  ["V", "iew", 37, "ml-[22px]"],
  ["P", "roject", 54, "ml-[22px]"],
  ["", "Report3D", 76, "ml-[22px]"],
  ["H", "FSS", 42, "ml-[22px]"],
  ["T", "ools", 41, "ml-[22px]"],
  ["W", "indow", 66, "ml-[22px]"],
  ["H", "elp", 37, "ml-[22px]"],
];
const TABS: [string, number, string][] = [
  ["Desktop", 62, "ml-[16px]"],
  ["View", 37, ""],
  ["Simulation", 81, "ml-[17px]"],
  ["Results", 53, "ml-[31px]"],
  ["Automation", 91, "ml-[31px]"],
  ["Ansys Minerva", 109, "ml-[32px]"],
  ["Learning and Support", 166, "ml-[34px]"],
];
const MDI = "flex h-[28px] w-[28px] items-center justify-center rounded-[2px] border border-[#e2e2e2] bg-white";

export default function App() {
  return (
    <div className="flex h-[1128px] w-[1920px] flex-col overflow-hidden bg-[#f0f0f0] font-['Open_Sans','Noto_Sans',sans-serif] text-[17px] leading-none text-black">
      <div className="flex h-[34px] shrink-0 items-center bg-linear-to-r from-[#eef2f7] via-[#f3f1f3] to-[#eef2f7] pl-[2px]">
        <svg viewBox="0 0 24 24" className="h-6 w-6">
          <rect width="24" height="24" fill="#0b0b0b" />
          <circle cx="12" cy="7" r="1.700" fill="#f0a020" />
          <path d="M9 3.500q-2.500 4 0 8M6 1.500q-4 6 0 12M3 1q-4 7 0 13M15 3.500q2.500 4 0 8M18 1.500q4 6 0 12M21 1q4 7 0 13" fill="none" stroke="#f0a020" strokeWidth="1.500" />
          <text x="2.500" y="23.500" fontSize="8.500" fill="#fff" fontWeight="bold" fontFamily="Liberation Sans" textLength="19">EDT</text>
        </svg>
        <Fit w={1042} className="-mt-px ml-[6px] text-[18px]">
          Ansys Electronics Desktop Student 2023 R2 - Dipole - HFSSDesign1 - Gain Plot 24 - SOLVED - [Dipole - HFSSDesign1 - Gain Plot 24]
        </Fit>
        <div className="mr-[29px] ml-auto flex items-center gap-[54px]">
          <span className="h-px w-[16px] bg-black" />
          <svg viewBox="0 0 16 16" className="h-4 w-4">
            <rect x=".8" y="3.800" width="11.400" height="11.400" rx="1.500" fill="none" stroke="#000" strokeWidth="1.400" />
            <path d="M3.500 1h8.500q3.200 0 3.200 3.200v8.300" fill="none" stroke="#000" strokeWidth="1.400" />
          </svg>
          <svg viewBox="0 0 16 16" className="h-4 w-4">
            <path d="M.5.5l15 15M15.500.5l-15 15" stroke="#000" strokeWidth="1.300" />
          </svg>
        </div>
      </div>

      <div className="flex h-[28px] shrink-0 items-center bg-white pl-[11px]">
        <svg viewBox="0 0 22 20" className="mb-[2px] h-[19px] w-[22px] shrink-0">
          <rect x=".7" y=".7" width="20.600" height="18.600" rx="1" fill="#f4f6f8" stroke="#8e9aa6" strokeWidth="1.300" />
          <rect x="3" y="4" width="8" height="12" fill="#3f9a86" />
          <rect x="3" y="4" width="4" height="12" fill="#3c6fa0" />
          <rect x="13" y="4" width="3" height="7" fill="#dfe4e8" />
          <rect x="18" y="4" width="2" height="8" fill="#56a58a" />
        </svg>
        {MENU.map(([u, rest, w, m]) => (
          <Fit key={u + rest} w={w} className={m + " pt-[2px] text-[18px]"}>
            <span className="underline decoration-1 underline-offset-[3px]">{u}</span>
            {rest}
          </Fit>
        ))}
        <div className="mr-px ml-auto flex gap-px pt-px">
          <span className={MDI}><span className="mt-[6px] h-[2px] w-[6px] bg-[#74808c]" /></span>
          <span className={MDI}>
            <svg viewBox="0 0 8 8" className="h-2 w-2">
              <path d="M2.500 3V.8h5V5H6M.6 3.800h5v3.600h-5z" fill="none" stroke="#74808c" strokeWidth="1.300" />
            </svg>
          </span>
          <span className={MDI}>
            <svg viewBox="0 0 8 8" className="h-2 w-2">
              <path d="M1 1l6 6M7 1L1 7" stroke="#74808c" strokeWidth="2" />
            </svg>
          </span>
        </div>
      </div>

      <Ribbon />

      <div className="flex h-[30px] shrink-0 text-[#4a4a4a]">
        {TABS.map(([t, w, m], i) =>
          i === 1 ? (
            <div key={t} className="-mt-[2px] ml-[15px] flex h-[29px] w-[63px] items-center justify-center border border-t-0 border-[#c9c9dc] bg-[#eeeef0] pl-px text-[#0f5a9c]">
              <Fit w={w} className="-mt-[2px]">{t}</Fit>
            </div>
          ) : (
            <div key={t} className={"flex h-[23px] items-center " + m}>
              <Fit w={w}>{t}</Fit>
            </div>
          ),
        )}
        <svg viewBox="0 0 24 24" className="mt-px mr-[5px] ml-auto h-6 w-6">
          <defs>
            <linearGradient id="logo" x1="0" y1="0" x2="1" y2="1">
              <stop offset="0" stopColor="#fff7a0" />
              <stop offset=".5" stopColor="#ffd21a" />
              <stop offset="1" stopColor="#f7a400" />
            </linearGradient>
          </defs>
          <rect width="24" height="24" rx="4" fill="url(#logo)" />
          <path d="M8 0h8l7 21q-.5 2.500-3 2.500h-2L12 5 6 23.500H4Q1 23 1 21z" fill="#231f20" />
        </svg>
      </div>

      <div className="flex h-[889px] shrink-0">
        <div className="flex w-[284px] shrink-0 flex-col">
          <PanelHeader title="Project Manager" w={126} />
          <Tree />
          <div className="h-[25px] shrink-0 pt-[7px] pl-[30px]">
            <div className="h-[11px] w-[164px] bg-[#868686]" />
          </div>
          <div className={"h-[6px] shrink-0 " + SPLIT} />
          <PanelHeader title="Properties" w={77} />
          <Properties />
        </div>
        <div className={"w-[6px] shrink-0 " + SPLIT} />
        <div className="h-[888px] w-[1629px] border border-t-2 border-l-2 border-t-[#6e6e6e] border-r-[#e0e0e0] border-b-[#e0e0e0] border-l-[#8a8a8a] bg-white">
          <Plot />
        </div>
      </div>

      <div className="flex h-[33px] shrink-0 items-center bg-[#cdd4dc] pr-[2px] pl-[4px] text-[#1c1c1c]">
        <Fit w={46} className="pt-px">Ready</Fit>
        <div className="ml-auto flex gap-[6px] pt-px font-['Liberation_Sans',Arial,sans-serif] text-[16px] text-black">
          <div className="flex h-[27px] w-[180px] items-center rounded-[3px] bg-white pl-[7px] shadow-[0_1px_0_#aab]">
            <svg viewBox="0 0 12 12" className="h-3 w-3">
              <path d="M6 .8L11.500 11H.5z" fill="#f7e000" stroke="#8a7c00" />
              <path d="M6 4v4M6 9v1.300" stroke="#222" strokeWidth="1.400" />
            </svg>
            <Fit w={139} className="ml-[10px] pt-px">Show 25 Messages</Fit>
          </div>
          <div className="flex h-[27px] w-[148px] items-center rounded-[3px] bg-white pl-[7px] shadow-[0_1px_0_#aab]">
            <svg viewBox="0 0 10 5" className="h-[5px] w-[10px]">
              <rect width="10" height="5" fill="#d0d0d0" />
              <rect width="10" height="1" fill="#555" />
              <rect y="1" width="6" height="3" fill="#12e012" />
            </svg>
            <Fit w={107} className="ml-[12px] pt-px">Show Progress</Fit>
          </div>
        </div>
      </div>
    </div>
  );
}
